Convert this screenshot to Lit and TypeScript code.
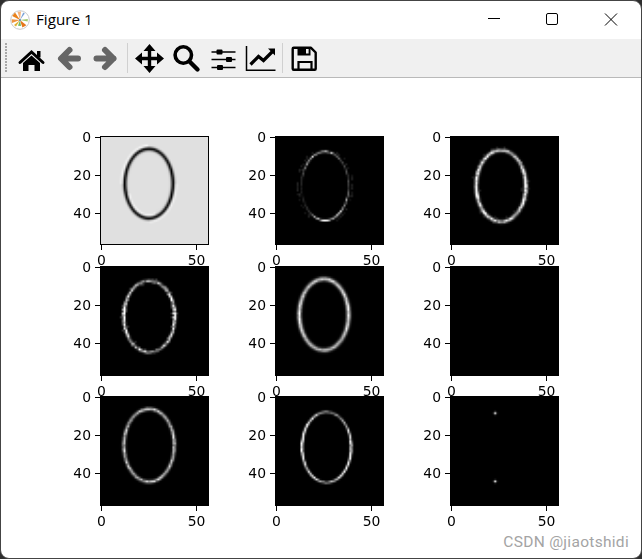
import { LitElement, html, css, svg } from 'lit';
import { customElement, property } from 'lit/decorators.js';

interface Ring {
  cx: number;
  cy: number;
  rx: number;
  ry: number;
  width: number;
  // brightness at 8 angles, clockwise from the right side
  gain: number[];
  speck: number;
  ghost?: number;
}

interface Plot {
  ring?: Ring;
  base?: boolean;
  dots?: number[][];
}

const PLOTS: Plot[] = [
  { base: true, ring: { cx: 25, cy: 24.3, rx: 12.8, ry: 18.5, width: 0.95, gain: [1, 1, 1, 1, 1, 1, 1, 1], speck: 0 } },
  { ring: { cx: 25.6, cy: 25.6, rx: 12.6, ry: 18.3, width: 0.5, gain: [0.25, 0.8, 1, 0.2, 0.1, 0.65, 0.9, 0.35], speck: 0.45, ghost: 0.15 } },
  { ring: { cx: 26.1, cy: 25.6, rx: 13.2, ry: 19, width: 0.9, gain: [1.2, 1, 0.8, 1, 1.2, 1, 0.75, 0.85], speck: 0.35 } },
  { ring: { cx: 25.2, cy: 25.6, rx: 13.6, ry: 18.9, width: 0.75, gain: [1.3, 0.75, 0.7, 0.85, 1.3, 0.75, 0.7, 0.75], speck: 0.55 } },
  { ring: { cx: 25, cy: 24.6, rx: 13.1, ry: 18.8, width: 1.05, gain: [0.95, 0.8, 0.7, 0.8, 0.95, 0.8, 0.85, 0.85], speck: 0.15 } },
  {},
  { ring: { cx: 25.1, cy: 25, rx: 13.4, ry: 19.2, width: 0.85, gain: [0.85, 0.75, 0.75, 0.75, 0.8, 0.7, 0.8, 0.7], speck: 0.3 } },
  { ring: { cx: 26.4, cy: 26, rx: 13.1, ry: 18.6, width: 0.6, gain: [1.3, 1.2, 0.7, 0.95, 1.4, 1.2, 0.6, 0.65], speck: 0.3 } },
  { dots: [[23, 8], [23, 44]] },
];

const SIZE = 57;

function makeRandom(seed: number) {
  let s = seed;
  return () => {
    s = (s * 16807) % 2147483647;
    return s / 2147483647;
  };
}

function gainAt(gain: number[], angle: number): number {
  const pos = ((angle / (Math.PI * 2) + 1) % 1) * gain.length;
  const i = Math.floor(pos);
  const f = pos - i;
  return gain[i % gain.length] * (1 - f) + gain[(i + 1) % gain.length] * f;
}

function pixelValue(plot: Plot, x: number, y: number, rnd: () => number): number {
  const grain = rnd();
  const ring = plot.ring;
  let v = 0;
  if (ring) {
    const nx = (x - ring.cx) / ring.rx;
    const ny = (y - ring.cy) / ring.ry;
    const r = Math.hypot(nx, ny);
    const d = (r - 1) * Math.hypot(nx * ring.rx, ny * ring.ry) / Math.max(r, 0.01);
    const shape = Math.exp(-((d / ring.width) ** 2));
    if (plot.base) {
      const halo = Math.exp(-(((d - 1.6) / 0.7) ** 2)) * (nx < 0 && ny < 0 ? 0.12 : nx > 0 && ny > 0 ? 0.1 : 0.02);
      const inner = Math.exp(-(((d + 1.6) / 0.6) ** 2)) * (ny > 0.3 && nx < 0.3 ? 0.12 : 0);
      return Math.min(1, 0.88 + halo + inner - shape * 0.9);
    }
    const g = gainAt(ring.gain, Math.atan2(ny, nx));
    v = shape * g * (1 - ring.speck + ring.speck * grain * 1.8);
    if (ring.speck > 0.3 && !ring.ghost && Math.abs(d) > ring.width && Math.abs(d) < ring.width + 1.4 && grain > 0.88) {
      v += 0.3 * ring.speck;
    }
    // faint dotted second outline along the sides
    if (ring.ghost && Math.abs(nx) > 0.45 && Math.abs(d - 1.9) < 0.55 && grain > 0.5) {
      v += ring.ghost * grain;
    }
  }
  for (const [dx, dy] of plot.dots ?? []) {
    if (dx === x && dy === y) v = 1;
    else if (Math.abs(dx - x) + Math.abs(dy - y) === 1) v = 0.1;
  }
  return Math.min(1, v);
}

@customElement('fig-axes')
export class FigAxes extends LitElement {
  static styles = css`
    :host {
      display: block;
      position: relative;
    }
    canvas {
      display: block;
      width: 109px;
      box-sizing: border-box;
      border: 1px solid #000;
    }
    svg {
      position: absolute;
      left: 0;
      top: 0;
      overflow: visible;
      pointer-events: none;
    }
    text {
      font-family: 'DejaVu Sans', sans-serif;
      font-size: 13.9px;
      fill: #000;
    }
    line {
      stroke: #000;
      stroke-width: 1;
    }
  `;

  @property({ type: Number }) index = 0;
  @property({ type: Number }) boxHeight = 110;

  firstUpdated() {
    const canvas = this.renderRoot.querySelector('canvas')!;
    const ctx = canvas.getContext('2d')!;
    const image = ctx.createImageData(SIZE, SIZE);
    const plot = PLOTS[this.index];
    const rnd = makeRandom(4211 + this.index * 977);
    for (let y = 0; y < SIZE; y++) {
      for (let x = 0; x < SIZE; x++) {
        const v = Math.round(pixelValue(plot, x, y, rnd) * 255);
        const p = (y * SIZE + x) * 4;
        image.data[p] = v;
        image.data[p + 1] = v;
        image.data[p + 2] = v;
        image.data[p + 3] = 255;
      }
    }
    ctx.putImageData(image, 0, 0);
  }

  render() {
    const bottom = this.boxHeight;
    return html`
      <canvas width=${SIZE} height=${SIZE} style="height:${bottom}px"></canvas>
      <svg width="109" height=${bottom}>
        ${[0, 20, 40].map((v) => {
          const y = 1.5 + v * 1.9;
          return svg`
            <line x1="-5" x2="0" y1=${y} y2=${y}></line>
            <text x="-9" y=${y + 4.5} text-anchor="end">${v}</text>`;
        })}
        ${[0, 50].map((v) => {
          const x = 1.5 + v * 1.9;
          return svg`
            <line x1=${x} x2=${x} y1=${bottom} y2=${bottom + 5}></line>
            <text x=${x} y=${bottom + 19.5} text-anchor="middle">${v}</text>`;
        })}
      </svg>
    `;
  }
}

// icons are drawn in window coordinates, so each viewBox starts at the button's own x
const ICONS = [
  {
    x: 12.5,
    art: svg`
      <path d="M19.5 62.5 31 52l11.5 10.5" fill="none" stroke="#000" stroke-width="3" stroke-linecap="round"/>
      <rect x="36.5" y="51" width="3.5" height="6.5"/>
      <path d="M31 55.5l-8.5 7.5V71H28v-6h6v6h5.5v-8z"/>`,
  },
  {
    x: 49.5,
    art: svg`<path d="M77.5 58.5H61M69 50l-8.5 8.5 8.5 8.5" fill="none" stroke="#666" stroke-width="6" stroke-linecap="round" stroke-linejoin="round"/>`,
  },
  {
    x: 86.5,
    art: svg`<path d="M96 58.5h17M104.5 50l8.5 8.5-8.5 8.5" fill="none" stroke="#666" stroke-width="6" stroke-linecap="round" stroke-linejoin="round"/>`,
  },
  {
    sep: true,
    x: 130.5,
    art: svg`
      <path d="M149 48v21M139 58.5h20" stroke="#000" stroke-width="3.4"/>
      <path d="M149 44l6 7h-12zM149 73l6-7h-12zM134.5 58.5l7-6v12zM163.5 58.5l-7-6v12z"/>`,
  },
  {
    x: 167.5,
    art: svg`
      <circle cx="182.8" cy="55" r="8.2" fill="none" stroke="#000" stroke-width="3.6"/>
      <path d="M189 61.5l8 8" stroke="#000" stroke-width="4.4" stroke-linecap="round"/>`,
  },
  {
    x: 204.5,
    art: svg`
      <path d="M211 52h24M211 59.5h24M211 67.5h24" stroke="#000" stroke-width="1.5"/>
      <rect x="216" y="49.5" width="6" height="5" rx="1"/>
      <rect x="225.5" y="57" width="6" height="5" rx="1"/>
      <rect x="216.5" y="65" width="6" height="5" rx="1"/>`,
  },
  {
    x: 241.5,
    art: svg`
      <path d="M246 46v24.2h29" fill="none" stroke="#000" stroke-width="1.5"/>
      <path d="M250 64.5l8-8 5 4 9-9" fill="none" stroke="#000" stroke-width="3.2"/>
      <path d="M274.5 48.5v7l-7-7z"/>`,
  },
  {
    sep: true,
    x: 285.5,
    art: svg`
      <path d="M293.2 47.8h17.3l4.7 4.7v16.2a1 1 0 0 1-1 1h-21a1 1 0 0 1-1-1V48.8a1 1 0 0 1 1-1z" fill="none" stroke="#000" stroke-width="2.4" stroke-linejoin="round"/>
      <path d="M297 47.5h13v8h-13z"/>
      <rect x="305.5" y="49" width="2.6" height="4.5" fill="#f0f0f0"/>
      <path d="M298 70v-8h13v8" fill="none" stroke="#000" stroke-width="2.2"/>`,
  },
];

@customElement('app-root')
export class AppRoot extends LitElement {
  static styles = css`
    :host {
      display: block;
      width: 642px;
      height: 559px;
      background: #2e2e2e;
      overflow: hidden;
      position: relative;
    }
    .window {
      height: 100%;
      box-sizing: border-box;
      border: 1px solid #444;
      border-radius: 9px;
      background: #fff;
      overflow: hidden;
      display: flex;
      flex-direction: column;
    }
    .titlebar {
      height: 38px;
      flex: none;
      display: flex;
      align-items: center;
      padding-left: 9px;
    }
    .logo {
      width: 20px;
      height: 20px;
      margin-right: 6px;
      margin-top: -1px;
    }
    .title {
      font-family: 'Open Sans', 'Noto Sans', sans-serif;
      font-size: 15.2px;
      color: #000;
      flex: 1;
      margin-top: -2px;
    }
    .controls {
      display: flex;
    }
    .controls svg {
      display: block;
      width: 58px;
      height: 38px;
    }
    .toolbar {
      height: 38px;
      flex: none;
      display: flex;
      background: #f0f0f0;
      border-bottom: 1px solid #b9b9b9;
    }
    .grip {
      width: 3px;
      height: 30px;
      margin: 4px 4.5px 0 4px;
      background-image: radial-gradient(circle at 1px 1px, #a8a8a8 1px, transparent 1.1px);
      background-size: 3px 3px;
    }
    .toolbar svg {
      display: block;
      width: 37px;
      height: 38px;
      flex: none;
    }
    .sep {
      width: 1px;
      height: 30px;
      margin: 4px 3px 0;
      background: #d0d0d0;
      flex: none;
    }
    .figure {
      flex: 1;
      display: grid;
      grid-template-columns: repeat(3, 109px);
      grid-auto-rows: 110px;
      column-gap: 66px;
      row-gap: 20px;
      padding: 58px 0 0 99px;
    }
    .mark {
      position: absolute;
      right: 13px;
      bottom: 8px;
      font-family: 'Roboto', sans-serif;
      font-size: 15.5px;
      letter-spacing: 0.3px;
      color: #a4a4a4;
    }
  `;

  render() {
    return html`
      <div class="window">
        <div class="titlebar">
          <svg class="logo" viewBox="0 0 20 20">
            <circle cx="10" cy="10" r="9.3" fill="#fff" stroke="#c8c8c8" stroke-width="1"/>
            <path d="M10 10 2.2 6 5 2.6z" fill="#e8801a"/>
            <path d="M10 10 1.6 9.2 2 13z" fill="#ef9440"/>
            <path d="M10 10 7.5 1.8 11 1.5z" fill="#f3b27a"/>
            <path d="M10 10 14.8 3.4 13.2 2.4z" fill="#7aa2d8"/>
            <path d="M10 10 17.8 9 17.7 11.6z" fill="#9fc86a"/>
            <path d="M10 10 12.4 17.6 16.4 15.2z" fill="#e5761a"/>
            <path d="M10 10 8 15.8 11 16z" fill="#70b860"/>
            <path d="M10 10 4 15 6 16.6z" fill="#e0b030"/>
            <circle cx="10" cy="10" r="1" fill="#4d7fc0"/>
          </svg>
          <span class="title">Figure 1</span>
          <div class="controls">
            <svg viewBox="0 0 58 38">
              <path d="M21 17.5h12" stroke="#000" stroke-width="1" fill="none"/>
            </svg>
            <svg viewBox="0 0 58 38">
              <rect x="21.5" y="12.5" width="11" height="11" rx="1.5" stroke="#000" stroke-width="1" fill="none"/>
            </svg>
            <svg viewBox="0 0 58 38">
              <path d="M22 12.5l12 12M34 12.5l-12 12" stroke="#000" stroke-width="1" fill="none"/>
            </svg>
          </div>
        </div>
        <div class="toolbar">
          <div class="grip"></div>
          ${ICONS.map(
            (icon) => html`
              ${icon.sep ? html`<div class="sep"></div>` : ''}
              <svg viewBox="${icon.x} 39 37 38">${icon.art}</svg>
            `,
          )}
        </div>
        <div class="figure">
          ${PLOTS.map((_, i) => html`<fig-axes .index=${i} .boxHeight=${i < 3 ? 109 : 110}></fig-axes>`)}
        </div>
      </div>
      <div class="mark">CSDN @jiaotshidi</div>
    `;
  }
}
